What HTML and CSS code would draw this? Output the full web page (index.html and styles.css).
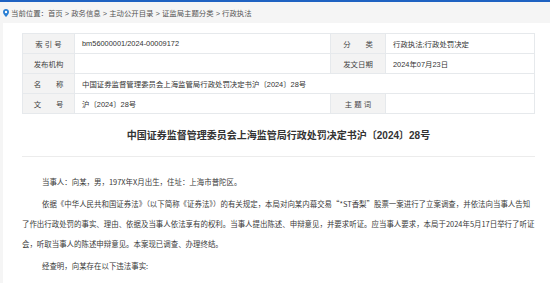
FILE: index.html
```html
<!DOCTYPE html>
<html>
<head>
  <meta charset="utf-8">
  <title>行政执法</title>
  <link rel="stylesheet" href="styles.css">
</head>
<body>
  <div class="topline"></div>
  <div class="crumb">
    <svg class="pin" width="6" height="8" viewBox="0 0 6 8">
      <path d="M3 0C1.3 0 0 1.3 0 3c0 2.2 3 5 3 5s3-2.8 3-5C6 1.3 4.7 0 3 0z" fill="#2a7fd4"/>
      <circle cx="3" cy="3" r="1.2" fill="#fff"/>
    </svg>
    <span>当前位置：首页 &gt; 政务信息 &gt; 主动公开目录 &gt; 证监局主题分类 &gt; 行政执法</span>
  </div>

  <div class="main">
    <table class="info">
      <tr>
        <td class="label">索 引 号</td>
        <td class="value">bm56000001/2024-00009172</td>
        <td class="label">分　　类</td>
        <td class="value">行政执法;行政处罚决定</td>
      </tr>
      <tr>
        <td class="label">发布机构</td>
        <td class="value"></td>
        <td class="label">发文日期</td>
        <td class="value">2024年07月23日</td>
      </tr>
      <tr>
        <td class="label">名　　称</td>
        <td class="value" colspan="3">中国证券监督管理委员会上海监管局行政处罚决定书沪〔2024〕28号</td>
      </tr>
      <tr>
        <td class="label">文　　号</td>
        <td class="value">沪〔2024〕28号</td>
        <td class="label">主 题 词</td>
        <td class="value"></td>
      </tr>
    </table>

    <h2 class="title">中国证券监督管理委员会上海监管局行政处罚决定书沪〔2024〕28号</h2>

    <div class="content">
      <p>当事人：向某，男，197X年X月出生，住址：上海市普陀区。</p>
      <p>依据《中华人民共和国证券法》（以下简称《证券法》）的有关规定，本局对向某内幕交易“*ST香梨”股票一案进行了立案调查，并依法向当事人告知了作出行政处罚的事实、理由、依据及当事人依法享有的权利。当事人提出陈述、申辩意见，并要求听证。应当事人要求，本局于2024年5月17日举行了听证会，听取当事人的陈述申辩意见。本案现已调查、办理终结。</p>
      <p>经查明，向某存在以下违法事实:</p>
    </div>
  </div>
</body>
</html>
```

FILE: styles.css
```css
body {
  margin: 0;
  background-color: #f5f5f5;
  font-family: "Liberation Sans", "Noto Sans CJK SC", sans-serif;
  color: #333;
}

.topline {
  height: 2px;
  background-color: #1f62c2;
}

.crumb {
  height: 21px;
  display: flex;
  align-items: center;
  padding-left: 3px;
  font-size: 7.4px;
  color: #555;
}

.crumb .pin {
  margin-right: 2px;
}

.main {
  margin-left: 3px;
  background-color: #fff;
  padding: 10px 15px 0 19px;
  min-height: 260px;
}

.info {
  width: 100%;
  border-collapse: collapse;
  table-layout: fixed;
  font-size: 7.4px;
}

.info td {
  height: 19px;
  border: 1px solid #e6e9ec;
  padding: 0 7px;
}

.info .label {
  width: 51px;
  padding: 0;
  text-align: center;
  background-color: #f3f3f3;
  color: #444;
}

.info tr td:nth-child(2) {
  width: 241px;
}

.info tr td:nth-child(3) {
  width: 54px;
}

.title {
  margin: 0;
  padding: 13px 0 14px;
  text-align: center;
  font-size: 10px;
  font-weight: bold;
  color: #333;
  border-bottom: 1px solid #ececec;
}

.content {
  font-family: "Noto Sans CJK SC", sans-serif;
  font-size: 7.45px;
  line-height: 20px;
  color: #3a3a3a;
  padding-top: 15px;
}

.content p {
  margin: 0 0 2px;
  text-indent: 20px;
}
```
